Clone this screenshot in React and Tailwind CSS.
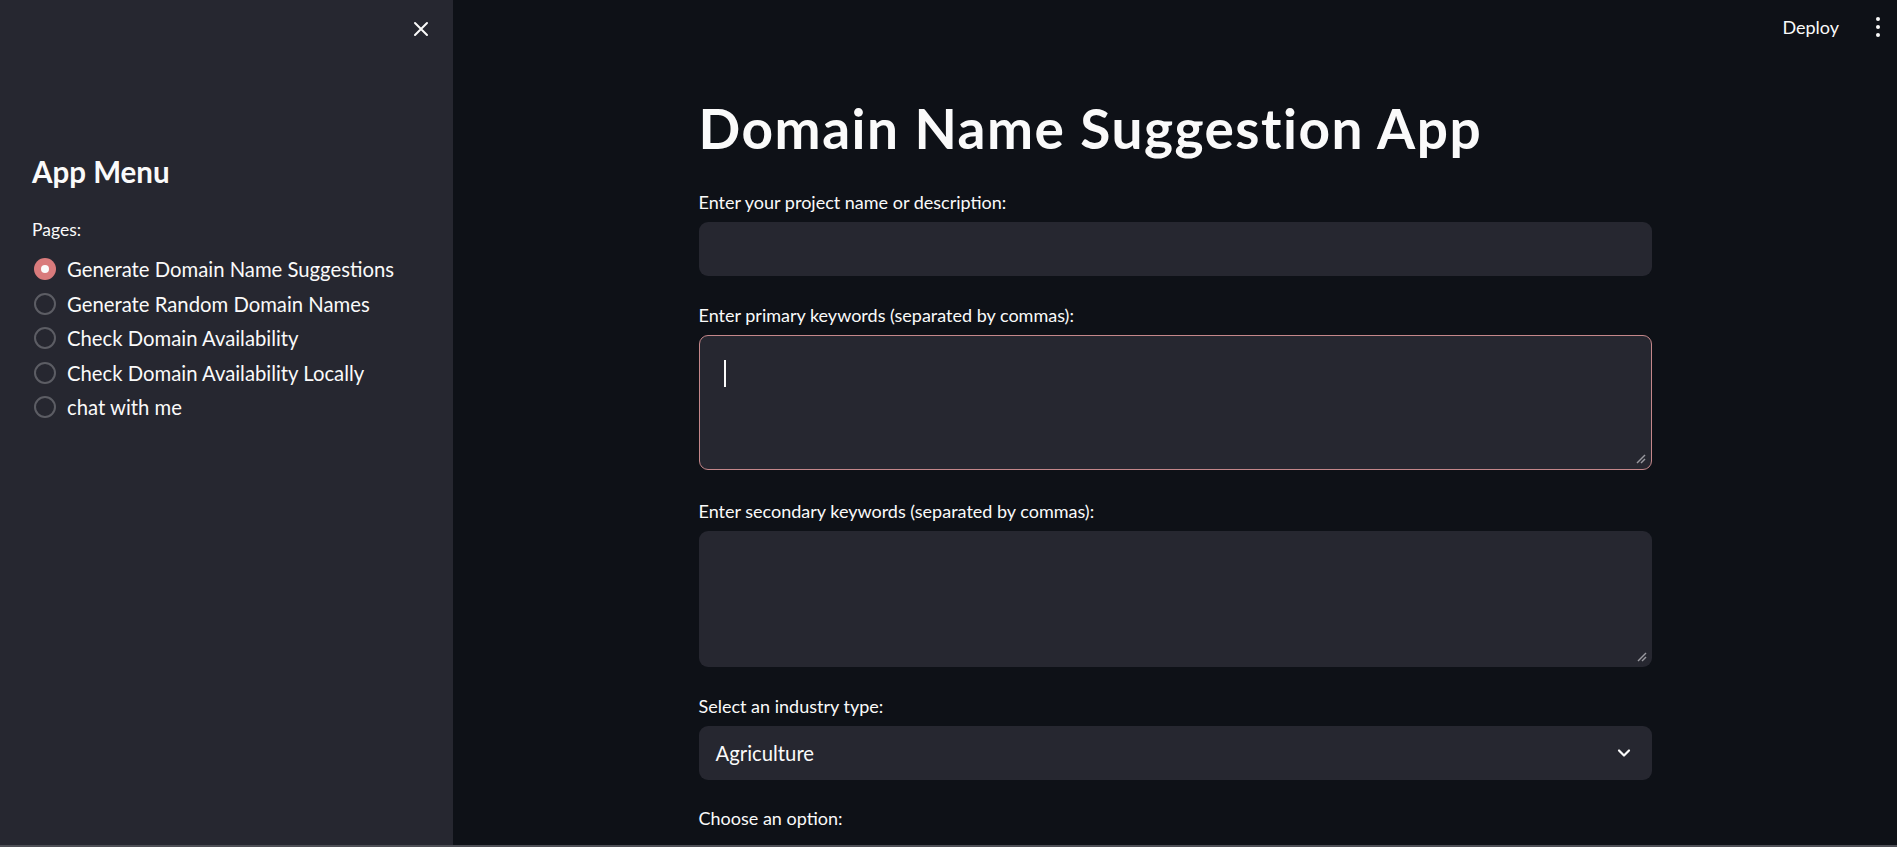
import React from "react";

const pages = [
  "Generate Domain Name Suggestions",
  "Generate Random Domain Names",
  "Check Domain Availability",
  "Check Domain Availability Locally",
  "chat with me",
];

const Grip = () => (
  <svg className="absolute right-[4px] bottom-[4px]" width="12" height="12" viewBox="0 0 12 12">
    <line x1="2" y1="10" x2="10" y2="2" stroke="#9a9aa0" strokeWidth="1.5" />
    <line x1="6" y1="10" x2="10" y2="6" stroke="#9a9aa0" strokeWidth="1.5" />
  </svg>
);

const Label = ({ children, className = "" }) => (
  <div className={`h-[24px] leading-[24px] text-[18px] text-[#fafafa] ${className}`}>{children}</div>
);

export default function App() {
  return (
    <div
      className="relative flex h-[847px] w-full overflow-hidden bg-[#0e1117] text-[#fafafa]"
      style={{ fontFamily: "Lato, 'Noto Sans', sans-serif" }}
    >
      {/* Sidebar */}
      <aside className="relative w-[453px] shrink-0 bg-[#262730]">
        <button className="absolute left-[413px] top-[21px] text-[#fafafa]">
          <svg width="16" height="16" viewBox="0 0 16 16">
            <path d="M2 2 L14 14 M14 2 L2 14" stroke="#fafafa" strokeWidth="2" strokeLinecap="round" />
          </svg>
        </button>

        <div className="pl-[32px] pt-[154px]">
          <h2 className="h-[36px] text-[29.5px] font-bold leading-[36px]">App Menu</h2>
          <div className="mt-[28px] h-[24px] text-[17.5px] leading-[24px]">Pages:</div>
          <div className="mt-[10px] flex flex-col">
            {pages.map((p, i) => (
              <div key={p} className="flex h-[34.5px] items-center">
                {i === 0 ? (
                  <span className="ml-[2px] flex h-[22px] w-[22px] items-center justify-center rounded-full bg-[#d97b7c]">
                    <span className="h-[8px] w-[8px] rounded-full bg-[#fafafa]" />
                  </span>
                ) : (
                  <span className="ml-[2px] h-[22px] w-[22px] rounded-full border-2 border-[#5c5d64]" />
                )}
                <span className="ml-[11px] text-[20.3px]">{p}</span>
              </div>
            ))}
          </div>
        </div>
      </aside>

      {/* Main */}
      <main className="relative flex-1">
        <div className="absolute right-[17px] top-[14px] flex items-center gap-[37px]">
          <span className="text-[18px] leading-[26px]">Deploy</span>
          <div className="flex flex-col items-center gap-[4px]">
            <span className="h-[4px] w-[4px] rounded-full bg-[#fafafa]" />
            <span className="h-[4px] w-[4px] rounded-full bg-[#fafafa]" />
            <span className="h-[4px] w-[4px] rounded-full bg-[#fafafa]" />
          </div>
        </div>

        <div className="mx-auto w-[953px] pt-[92px]">
          <h1 className="h-[72px] text-[55px] font-bold leading-[72px] tracking-[1.5px]">
            Domain Name Suggestion App
          </h1>

          <Label className="mt-[26px]">Enter your project name or description:</Label>
          <div className="mt-[8px] h-[54px] rounded-[9px] bg-[#262730]" />

          <Label className="mt-[27px]">Enter primary keywords (separated by commas):</Label>
          <div className="relative mt-[8px] h-[135px] rounded-[9px] border border-[#c4878a] bg-[#262730]">
            <span className="absolute left-[24px] top-[24px] h-[27px] w-[2px] bg-[#fafafa]" />
            <Grip />
          </div>

          <Label className="mt-[29px]">Enter secondary keywords (separated by commas):</Label>
          <div className="relative mt-[8px] h-[136px] rounded-[9px] bg-[#262730]">
            <Grip />
          </div>

          <Label className="mt-[27px]">Select an industry type:</Label>
          <div className="mt-[8px] flex h-[54px] items-center justify-between rounded-[9px] bg-[#262730] pl-[17px] pr-[20px]">
            <span className="text-[20.3px]">Agriculture</span>
            <svg width="16" height="16" viewBox="0 0 16 16">
              <path d="M3 5.5 L8 10.5 L13 5.5" fill="none" stroke="#fafafa" strokeWidth="2.2" strokeLinecap="round" strokeLinejoin="round" />
            </svg>
          </div>

          <Label className="mt-[26px]">Choose an option:</Label>
        </div>
      </main>

      <div className="absolute bottom-0 left-0 h-[2px] w-full bg-[#4e4f56]" />
    </div>
  );
}
